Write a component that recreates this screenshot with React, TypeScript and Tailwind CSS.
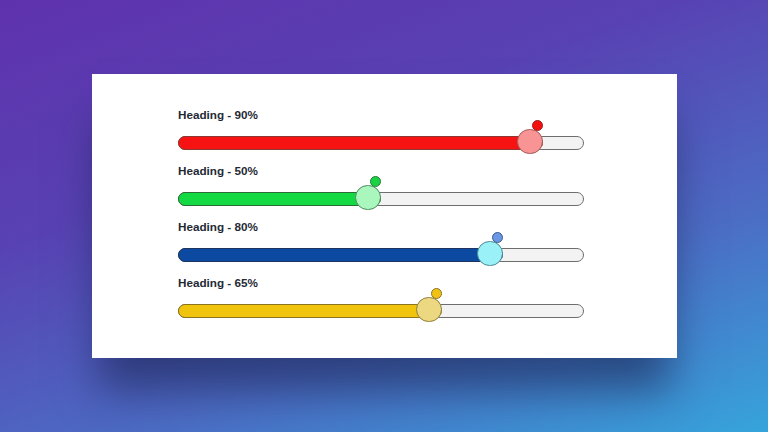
const sliders = [
  { label: "Heading - 90%", value: 90, fill: "bg-[#f71313]", fillBorder: "border-[#8a3a30]", thumb: "bg-[#f89494] border-[#a45a5a]", dot: "bg-[#f50f0f] border-[#9a2020]" },
  { label: "Heading - 50%", value: 50, fill: "bg-[#13d942]", fillBorder: "border-[#2c6a3a]", thumb: "bg-[#a9f7bd] border-[#4c8a5c]", dot: "bg-[#18d442] border-[#2a7a3a]" },
  { label: "Heading - 80%", value: 80, fill: "bg-[#0c49a0]", fillBorder: "border-[#1d3560]", thumb: "bg-[#9af1f8] border-[#4a8a94]", dot: "bg-[#6a96e4] border-[#3a5a94]" },
  { label: "Heading - 65%", value: 65, fill: "bg-[#f0c40d]", fillBorder: "border-[#8a7420]", thumb: "bg-[#ecd880] border-[#8f7f3a]", dot: "bg-[#f0c212] border-[#8f7420]" },
];

function Slider({ s }: { s: (typeof sliders)[number] }) {
  return (
    <div className="flex flex-col">
      <div className="h-[13px] text-[11.7px] leading-[13px] font-bold text-[#1f2a35]">{s.label}</div>
      <div className="relative mt-[15px] h-[14px] w-[406px] rounded-full border border-[#6e6e6e] bg-[#f3f3f3]">
        <div
          className={`absolute left-[-1px] top-[-1px] h-[14px] rounded-full border ${s.fillBorder} ${s.fill}`}
          style={{ width: `${(s.value / 100) * 406}px` }}
        >
          <div className={`absolute right-[-1px] top-[-8px] h-[25px] w-[26px] rounded-full border ${s.thumb}`} />
          <div className={`absolute right-[-1px] top-[-17px] h-[11px] w-[11px] rounded-full border ${s.dot}`} />
        </div>
      </div>
    </div>
  );
}

export default function App() {
  return (
    <div
      className="w-[768px] h-[432px] overflow-hidden bg-[linear-gradient(160deg,#5f32ad_0%,#5842b3_35%,#4c6cc4_68%,#36a4db_100%)] pt-[74px] pl-[92px]"
      style={{ fontFamily: '"Liberation Sans", Arial, sans-serif' }}
    >
      <div className="w-[585px] h-[284px] bg-white shadow-[0_38px_40px_-6px_rgba(25,35,80,0.6)] pl-[86px] pt-[34px] flex flex-col gap-[14px]">
        {sliders.map((s) => (
          <Slider key={s.label} s={s} />
        ))}
      </div>
    </div>
  );
}
